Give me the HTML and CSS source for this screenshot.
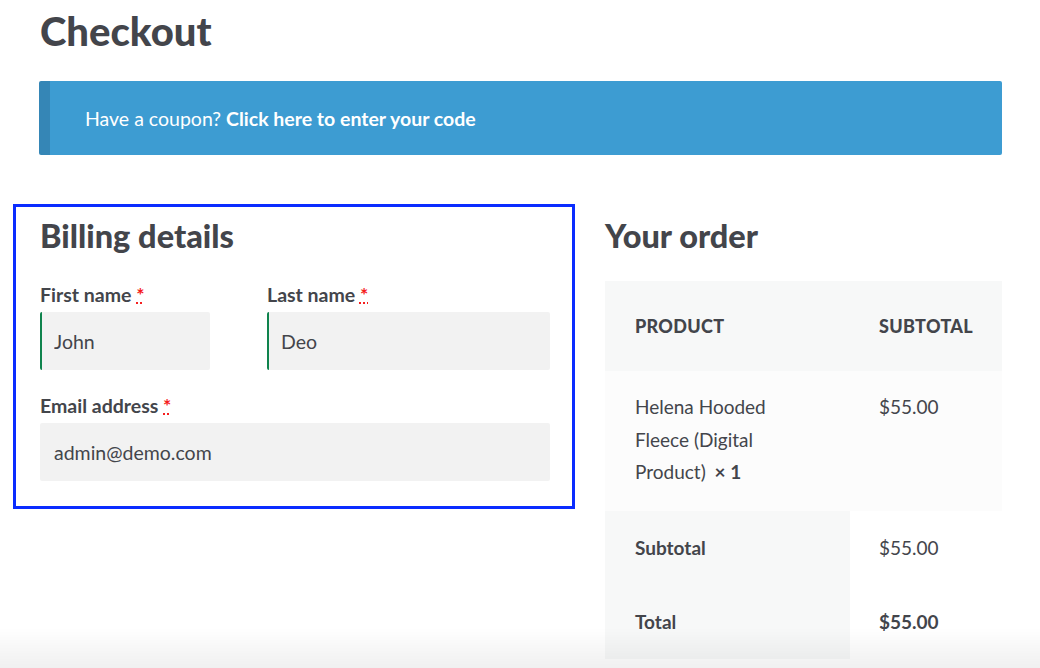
FILE: index.html
```html
<!doctype html>
<html>
    <head>
        <meta charset="utf-8">
        <meta name="viewport" content="width=device-width,initial-scale=1">
        <title>Checkout</title>
        <link rel="stylesheet" href="styles.css">
    </head>
    <body>
        <section class="main">
            <h1 class="entry-title">Checkout</h1>
            <div class="coupon-info">
                Have a coupon? <a href="#" class="showcoupon">Click here to enter your code</a>
            </div>
            <div class="checkout-cols">
                <div class="billing-box">
                    <h3>Billing details</h3>
                    <div class="billing-fields">
                        <p class="form-row row-first">
                            <label for="first-name">First name <abbr class="required" title="required">*</abbr></label>
                            <input type="text" id="first-name" class="validated" value="John">
                        </p>
                        <p class="form-row row-last">
                            <label for="last-name">Last name <abbr class="required" title="required">*</abbr></label>
                            <input type="text" id="last-name" class="validated" value="Deo">
                        </p>
                        <p class="form-row row-wide">
                            <label for="email">Email address <abbr class="required" title="required">*</abbr></label>
                            <input type="email" id="email" value="admin@demo.com">
                        </p>
                    </div>
                </div>
                <div class="order-review">
                    <h3>Your order</h3>
                    <table class="order-table">
                        <thead>
                            <tr>
                                <th class="col-name">Product</th>
                                <th class="col-total">Subtotal</th>
                            </tr>
                        </thead>
                        <tbody>
                            <tr class="cart-item">
                                <td class="col-name">Helena Hooded Fleece (Digital Product) <strong class="qty">×&nbsp;1</strong></td>
                                <td class="col-total">$55.00</td>
                            </tr>
                        </tbody>
                        <tfoot>
                            <tr class="cart-subtotal">
                                <th>Subtotal</th>
                                <td>$55.00</td>
                            </tr>
                            <tr class="order-total">
                                <th>Total</th>
                                <td><strong>$55.00</strong></td>
                            </tr>
                        </tfoot>
                    </table>
                </div>
            </div>
        </section>
        <div class="bottom-shade"></div>
    </body>
</html>
```

FILE: styles.css
```css
body {
    margin: 0;
    font-family: Lato, "Liberation Sans", sans-serif;
    font-size: 19px;
    color: #43454b;
    background: #fff;
    overflow: hidden;
}
.main {
    padding: 0 38px 0 39px;
}
h1, h3 {
    margin: 0;
    font-weight: 900;
    color: #43454b;
}
.entry-title {
    font-size: 40px;
    line-height: 1;
    padding: 11px 0 0 1px;
    height: 70px;
    box-sizing: border-box;
    margin-bottom: 11px;
}
.coupon-info {
    height: 74px;
    box-sizing: border-box;
    background: #3d9cd2;
    border-left: 11px solid #3586b6;
    border-radius: 2px;
    color: #fff;
    font-size: 19.5px;
    padding-left: 35px;
    display: flex;
    align-items: center;
}
.coupon-info a {
    color: #fff;
    font-weight: 700;
    text-decoration: none;
    margin-left: 5px;
}
.checkout-cols {
    display: flex;
    align-items: flex-start;
    margin-top: 49px;
}
.billing-box {
    width: 562px;
    box-sizing: border-box;
    margin-left: -26px;
    border: 3px solid #0a2cff;
    padding: 11px 23px 25px 24px;
}
.billing-box h3,
.order-review h3 {
    font-size: 32.5px;
    line-height: 36px;
}
.billing-fields {
    display: grid;
    grid-template-columns: 170px 283px;
    column-gap: 57px;
    row-gap: 25px;
    margin-top: 30px;
}
.form-row {
    margin: 0;
}
.row-wide {
    grid-column: 1 / 3;
}
.form-row label {
    display: block;
    font-weight: 700;
    font-size: 19.5px;
    line-height: 22px;
    margin-bottom: 6px;
}
.required {
    color: #f51b1b;
    text-decoration: underline dotted #f51b1b;
    font-weight: 700;
}
.form-row input {
    display: block;
    width: 100%;
    height: 58px;
    box-sizing: border-box;
    border: 0;
    border-radius: 2px;
    background: #f2f2f2;
    font-family: Lato, "Liberation Sans", sans-serif;
    font-size: 19.5px;
    color: #43454b;
    padding: 0 14px;
    outline: none;
}
.form-row input.validated {
    border-left: 2px solid #0f834d;
    padding-left: 12px;
}
.order-review {
    width: 397px;
    margin-left: 30px;
    padding-top: 14px;
}
.order-table {
    width: 100%;
    border-collapse: collapse;
    margin-top: 27px;
}
.order-table th,
.order-table td {
    text-align: left;
    vertical-align: top;
    padding: 0 30px 0 30px;
}
.order-table .col-name,
.order-table tfoot th {
    width: 245px;
    box-sizing: border-box;
}
.order-table td.col-total,
.order-table th.col-total,
.order-table tfoot td {
    padding-left: 29px;
    padding-right: 10px;
}
.order-table thead th {
    background: #f7f8f8;
    height: 90px;
    vertical-align: middle;
    text-transform: uppercase;
    font-size: 18px;
    font-weight: 900;
    letter-spacing: 0.3px;
}
.order-table tbody td {
    background: #fcfcfc;
    line-height: 32.5px;
    padding-top: 20px;
    padding-bottom: 22px;
}
.qty {
    font-weight: 700;
    margin-left: 4px;
}
.order-table tfoot th {
    background: #f7f8f8;
    font-weight: 700;
}
.order-table tfoot th,
.order-table tfoot td {
    height: 74px;
    vertical-align: middle;
}
.bottom-shade {
    position: fixed;
    left: 0;
    right: 0;
    bottom: 0;
    height: 40px;
    background: linear-gradient(to bottom, rgba(0, 0, 0, 0), rgba(0, 0, 0, 0.06));
    pointer-events: none;
}
```
